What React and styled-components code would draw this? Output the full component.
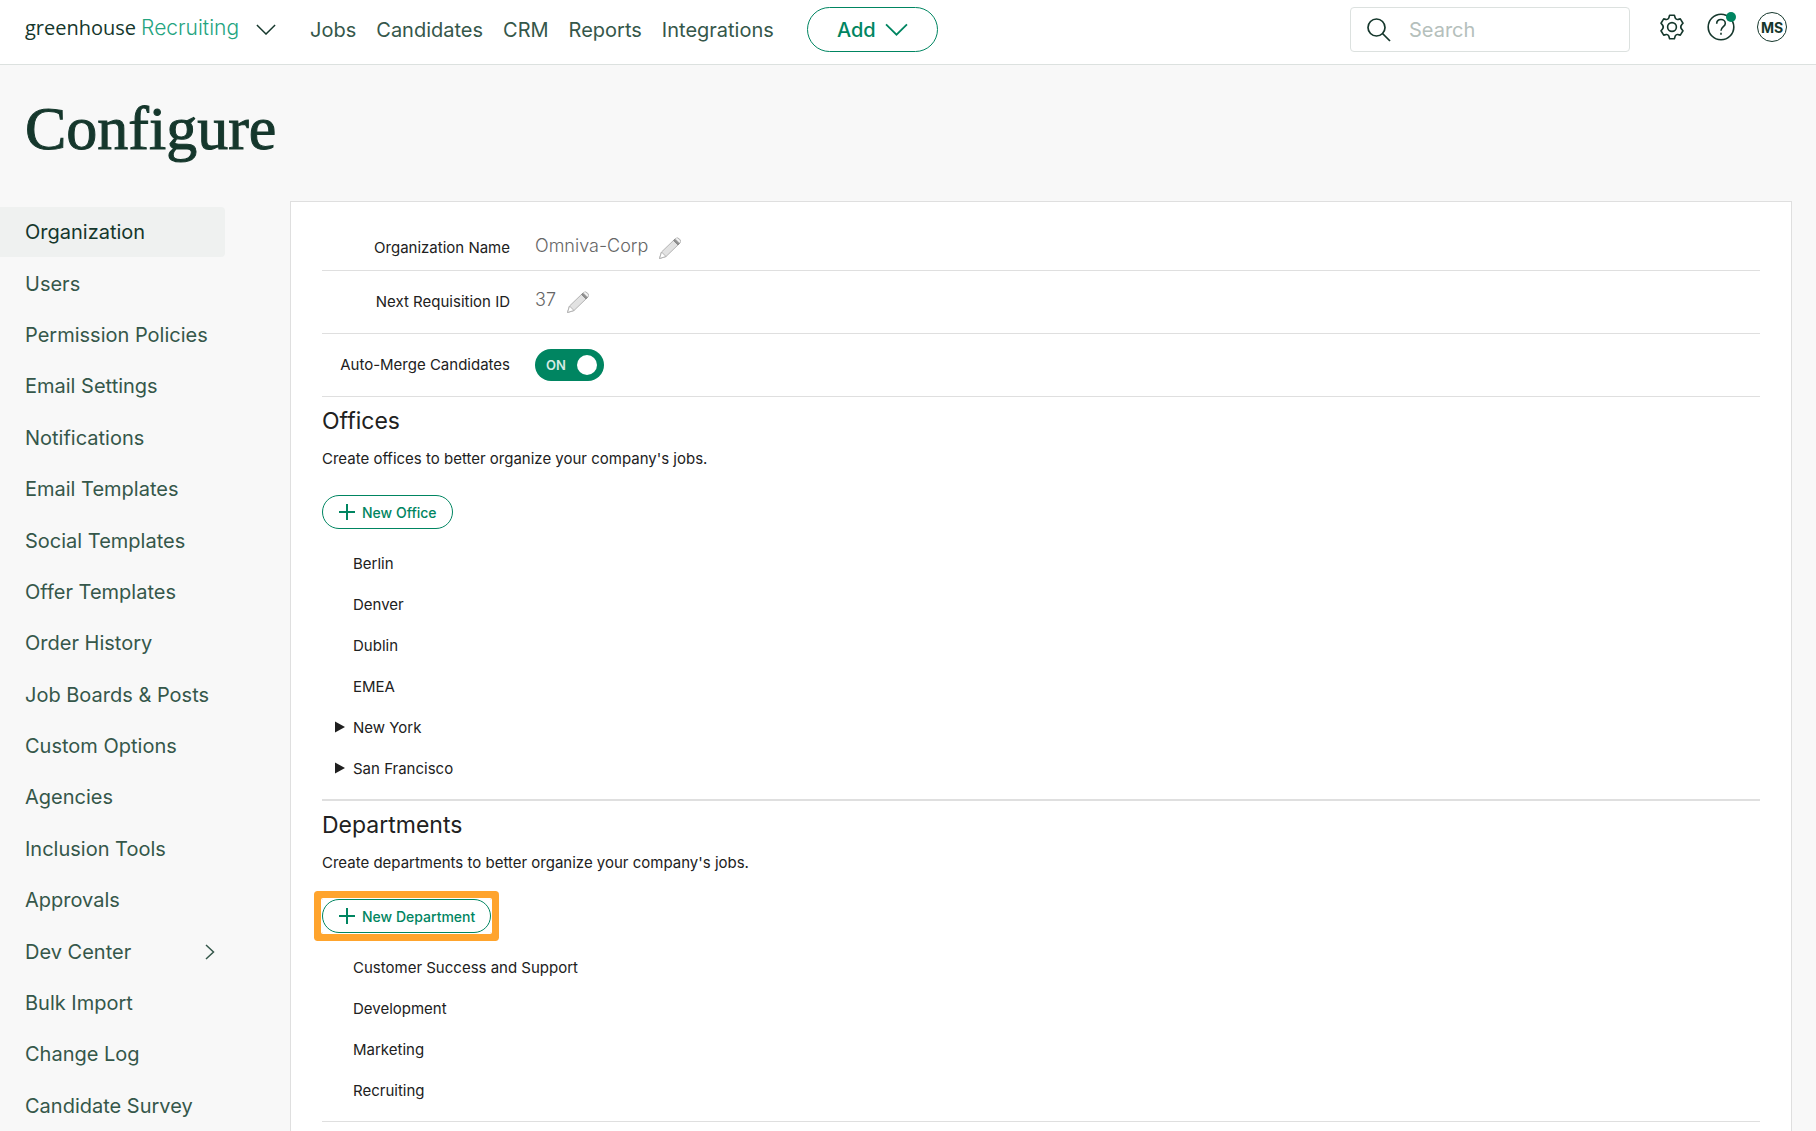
import React, { useState } from 'react';
import styled, { createGlobalStyle } from 'styled-components';

const sidebarItems = [
  "Organization",
  "Users",
  "Permission Policies",
  "Email Settings",
  "Notifications",
  "Email Templates",
  "Social Templates",
  "Offer Templates",
  "Order History",
  "Job Boards & Posts",
  "Custom Options",
  "Agencies",
  "Inclusion Tools",
  "Approvals",
  "Dev Center",
  "Bulk Import",
  "Change Log",
  "Candidate Survey",
];

const offices = [
  { name: "Berlin" },
  { name: "Denver" },
  { name: "Dublin" },
  { name: "EMEA" },
  { name: "New York", nested: true },
  { name: "San Francisco", nested: true },
];

const departments = [
  { name: "Customer Success and Support" },
  { name: "Development" },
  { name: "Marketing" },
  { name: "Recruiting" },
];

function ChevronDown({ width, height, stroke }) {
  return (
    <svg width={width} height={height} viewBox="0 0 22 12" fill="none" stroke="currentColor" strokeWidth={stroke} aria-hidden="true">
      <path d="M1 1l10 10L21 1" />
    </svg>
  );
}

function SearchIcon() {
  return (
    <svg width="24" height="24" viewBox="0 0 24 24" fill="none" stroke="currentColor" strokeWidth="1.7" aria-hidden="true">
      <circle cx="9.5" cy="9.5" r="8.5" />
      <path d="M15.5 15.5l7.5 7.5" />
    </svg>
  );
}

function GearIcon() {
  return (
    <svg width="26" height="26" viewBox="0 0 26 26" fill="none" stroke="currentColor" strokeWidth="1.6" strokeLinejoin="round" aria-hidden="true">
      <path d="M10.6 1.2h4.8l.9 3a2.6 2.6 0 0 0 3 1.2l2-.5 2.7 4.3-1.2 1.4a3.6 3.6 0 0 0 0 4.8l1.2 1.4-2.7 4.3-2-.5a2.6 2.6 0 0 0-3 1.2l-.9 3h-4.8l-.9-3a2.6 2.6 0 0 0-3-1.2l-2 .5L2 16.8l1.2-1.4a3.6 3.6 0 0 0 0-4.8L2 9.2l2.7-4.3 2 .5a2.6 2.6 0 0 0 3-1.2z" />
      <circle cx="13" cy="13" r="4.4" />
    </svg>
  );
}

function HelpIcon() {
  return (
    <svg width="28" height="30" viewBox="0 0 28 30" fill="none" stroke="currentColor" strokeWidth="1.6" overflow="visible" aria-hidden="true">
      <circle cx="14" cy="15" r="12.8" />
      <path d="M9.7 11.8c0-2.6 1.9-4.3 4.3-4.3s4.3 1.6 4.3 3.9c0 3.4-4.3 3.3-4.3 7.4" />
      <path d="M14 20.8v2" />
      <circle cx="24" cy="5" r="5" fill="#008561" stroke="none" />
    </svg>
  );
}

function PencilIcon() {
  return (
    <svg width="24" height="24" viewBox="0 0 24 24" fill="none" stroke="#b3b3b3" aria-hidden="true">
      <path d="M1.5 22.5L3.5 16 17.5 2.5q2-1.5 4 .5t.5 4L8 20.5z" fill="#e2e2e2" />
      <path d="M1.5 22.5L3.5 16 8 20.5z" fill="#fff" />
      <path d="M15.5 4.5l4.5 4.5 1.3-1.3-4.5-4.5z" fill="#8d8d8d" stroke="#8d8d8d" />
      <path d="M18.5 2.2l3.7 3.7" stroke="#fff" />
    </svg>
  );
}

function EditableRow({ label, value, tall }) {
  return (
    <SettingRow $tall={tall}>
      <SettingLabel>{label}</SettingLabel>
      <SettingValue>{value}</SettingValue>
      <IconButton aria-label={"Edit " + label}><PencilIcon /></IconButton>
    </SettingRow>
  );
}

function GroupSection({ title, description, action, items, highlighted, divider }) {
  return (
    <Section $divider={divider}>
      <SectionTitle>{title}</SectionTitle>
      <Description>{description}</Description>
      <ActionFrame $highlighted={highlighted}>
        <OutlineButton>
          <svg width="16" height="16" viewBox="0 0 16 16" stroke="currentColor" strokeWidth="2" aria-hidden="true">
            <path d="M8 0v16M0 8h16" />
          </svg>
          {action}
        </OutlineButton>
      </ActionFrame>
      <TreeList>
        {items.map((item) => (
          <TreeItem key={item.name}>
            <Arrow>
              {item.nested && (
                <svg width="10" height="12" viewBox="0 0 10 12" fill="#1f1f1f" aria-hidden="true">
                  <path d="M0 .5L10 6 0 11.5z" />
                </svg>
              )}
            </Arrow>
            {item.name}
          </TreeItem>
        ))}
      </TreeList>
    </Section>
  );
}

function App() {

  const [activeItem, setActiveItem] = useState("Organization");
  const [autoMerge, setAutoMerge] = useState(true);

  return (
    <Page>
      <GlobalStyle />
      <Header>
        <Brand href="#">
          <BrandName>greenhouse</BrandName>
          <BrandProduct>Recruiting</BrandProduct>
        </Brand>
        <IconButton aria-label="Switch product"><ChevronDown width="20" height="11" stroke="1.6" /></IconButton>
        <MainNav>
          <NavLink href="#">Jobs</NavLink>
          <NavLink href="#">Candidates</NavLink>
          <NavLink href="#">CRM</NavLink>
          <NavLink href="#">Reports</NavLink>
          <NavLink href="#">Integrations</NavLink>
        </MainNav>
        <AddButton>
          Add
          <ChevronDown width="23" height="13" stroke="1.7" />
        </AddButton>
        <SearchBox>
          <SearchIcon />
          <SearchInput type="text" placeholder="Search" aria-label="Search" />
        </SearchBox>
        <Tools>
          <IconButton aria-label="Settings"><GearIcon /></IconButton>
          <IconButton aria-label="Help"><HelpIcon /></IconButton>
          <Avatar>MS</Avatar>
        </Tools>
      </Header>

      <PageTitle>Configure</PageTitle>

      <Body>
        <Sidebar>
          {sidebarItems.map((item) => (
            <SidebarLink
              key={item}
              href="#"
              className={activeItem === item ? "active" : ""}
              onClick={() => setActiveItem(item)}
            >
              {item}
              {item === "Dev Center" && (
                <svg width="10" height="16" viewBox="0 0 10 16" fill="none" stroke="currentColor" strokeWidth="1.5" aria-hidden="true">
                  <path d="M1 1l7.500 7L1 15" />
                </svg>
              )}
            </SidebarLink>
          ))}
        </Sidebar>

        <Panel>
          <EditableRow label="Organization Name" value="Omniva-Corp" />
          <EditableRow label="Next Requisition ID" value="37" tall />
          <SettingRow $tall>
            <SettingLabel as="label" htmlFor="auto-merge">Auto-Merge Candidates</SettingLabel>
            <Toggle $on={autoMerge}>
              <ToggleInput
                id="auto-merge"
                type="checkbox"
                checked={autoMerge}
                onChange={(e) => setAutoMerge(e.target.checked)}
              />
              {autoMerge ? "ON" : "OFF"}
              <Knob />
            </Toggle>
          </SettingRow>

          <GroupSection
            title="Offices"
            description="Create offices to better organize your company's jobs."
            action="New Office"
            items={offices}
            divider={2}
          />
          <GroupSection
            title="Departments"
            description="Create departments to better organize your company's jobs."
            action="New Department"
            items={departments}
            divider={1}
            highlighted
          />
        </Panel>
      </Body>
    </Page>
  );
}


const GlobalStyle = createGlobalStyle`
  * {
    box-sizing: border-box;
  }

  body {
    margin: 0;
    background: #f8f8f8;
    color: #212121;
    font-family: Inter, "Liberation Sans", sans-serif;
    font-size: 15px;
  }

  button, input {
    font-family: inherit;
  }
`;

const Page = styled.div`
  display: flex;
  flex-direction: column;
  min-height: 100vh;
`;

const Header = styled.header`
  display: flex;
  align-items: center;
  height: 65px;
  padding: 7px 29px 12px 25px;
  background: white;
  border-bottom: 1px solid #dce1df;
  color: #15372c;
`;

const Brand = styled.a`
  display: flex;
  align-items: baseline;
  gap: 5px;
  margin-right: 17px;
  padding-bottom: 3px;
  text-decoration: none;
`;

const BrandName = styled.span`
  font-family: "Open Sans", sans-serif;
  font-size: 20px;
  line-height: 24px;
  color: #15372c;
`;

const BrandProduct = styled.span`
  font-size: 21px;
  font-weight: 300;
  line-height: 24px;
  color: #24a47f;
`;

const MainNav = styled.nav`
  display: flex;
  gap: 20px;
  margin-left: 34px;
  margin-right: 33px;
`;

const NavLink = styled.a`
  font-size: 20px;
  line-height: 24px;
  color: #35574a;
  text-decoration: none;
`;

const AddButton = styled.button`
  display: flex;
  align-items: center;
  justify-content: center;
  gap: 9px;
  width: 131px;
  height: 45px;
  border: 1px solid #008561;
  border-radius: 23px;
  background: white;
  color: #008561;
  font-size: 20px;
  font-weight: 500;
`;

const SearchBox = styled.div`
  display: flex;
  align-items: center;
  gap: 18px;
  width: 280px;
  height: 45px;
  margin-left: auto;
  padding: 0 16px;
  border: 1px solid #dce1df;
  border-radius: 4px;
`;

const SearchInput = styled.input`
  flex: 1;
  min-width: 0;
  padding: 0;
  border: none;
  outline: none;
  background: transparent;
  font-size: 20px;

  &::placeholder {
    color: #b5c0bc;
  }
`;

const Tools = styled.div`
  display: flex;
  align-items: center;
  gap: 22px;
  margin-left: 29px;
  padding-bottom: 5px;
`;

const IconButton = styled.button`
  display: flex;
  padding: 0;
  border: none;
  background: none;
  color: #15372c;
`;

const Avatar = styled.button`
  width: 30px;
  height: 30px;
  padding: 0;
  border: 1px solid #15372c;
  border-radius: 50%;
  background: white;
  color: #15372c;
  font-size: 14px;
  font-weight: 700;
`;

const PageTitle = styled.h1`
  margin: 27px 25px 37px;
  color: #15372c;
  font-family: "Liberation Serif", serif;
  font-size: 62px;
  font-weight: 400;
  line-height: 72px;
  -webkit-text-stroke: 1px #15372c;
`;

const Body = styled.div`
  display: flex;
  flex: 1;
  align-items: stretch;
  gap: 65px;
  padding-right: 24px;
`;

const Sidebar = styled.nav`
  display: flex;
  flex-direction: column;
  flex: none;
  gap: 1px;
  width: 225px;
  padding-top: 6px;
`;

const SidebarLink = styled.a`
  display: flex;
  flex: 1;
  align-items: center;
  justify-content: space-between;
  padding: 0 10px 0 25px;
  border-radius: 0 4px 4px 0;
  color: #35574a;
  font-size: 20px;
  text-decoration: none;

  &.active {
    background: #eff1f0;
    color: #15372c;
  }
`;

const Panel = styled.main`
  flex: 1;
  padding: 6px 31px 0;
  background: white;
  border: 1px solid #dfdfdf;
  border-bottom: none;
`;

const SettingRow = styled.div`
  display: flex;
  align-items: center;
  height: 63px;
  padding-top: ${props => props.$tall ? "0" : "18px"};
  border-bottom: 1px solid #dfdfdf;
`;

const SettingLabel = styled.span`
  width: 188px;
  margin-right: 25px;
  line-height: 20px;
  text-align: right;
`;

const SettingValue = styled.span`
  margin-right: 10px;
  padding-bottom: 4px;
  color: #666;
  font-size: 18px;
  font-weight: 300;
  line-height: 22px;
`;

const Toggle = styled.label`
  display: flex;
  align-items: center;
  justify-content: space-between;
  width: 69px;
  height: 32px;
  padding: 0 7px 0 11px;
  border-radius: 16px;
  background: ${props => props.$on ? "#008561" : "#8a9b95"};
  color: #d5ebe4;
  font-size: 13px;
  font-weight: 600;
`;

const ToggleInput = styled.input`
  position: absolute;
  opacity: 0;
`;

const Knob = styled.span`
  width: 20px;
  height: 20px;
  border-radius: 50%;
  background: white;
`;

const Section = styled.section`
  padding: 8px 0 10px;
  border-bottom: ${props => props.$divider}px solid #dfdfdf;
`;

const SectionTitle = styled.h2`
  margin: 0 0 12px;
  font-size: 23px;
  font-weight: 400;
  line-height: 32px;
`;

const Description = styled.p`
  margin: 0 0 26px;
  line-height: 20px;
`;

const ActionFrame = styled.div`
  width: fit-content;
  border-radius: 1px;
  box-shadow: ${props => props.$highlighted ? "0 0 0 1px white, 0 0 0 8px #ffa42d" : "none"};
`;

const OutlineButton = styled.button`
  display: flex;
  align-items: center;
  gap: 7px;
  height: 34px;
  padding: 0 15px 0 16px;
  border: 1px solid #008561;
  border-radius: 17px;
  background: white;
  color: #008561;
  font-size: 14px;
  font-weight: 500;
`;

const TreeList = styled.ul`
  margin: 14px 0 0;
  padding: 0;
  list-style: none;
`;

const TreeItem = styled.li`
  display: flex;
  align-items: center;
  height: 41px;
`;

const Arrow = styled.span`
  width: 31px;
  padding-left: 13px;
`;

export default App
